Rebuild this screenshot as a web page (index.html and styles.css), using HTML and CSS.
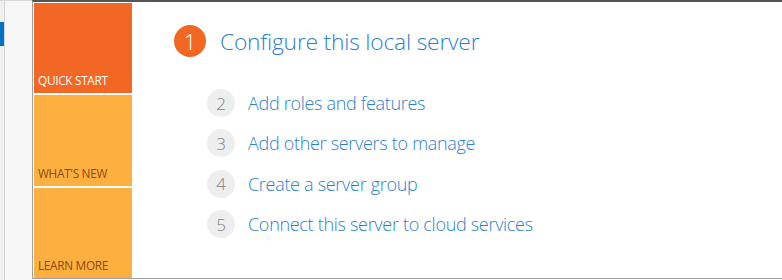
FILE: index.html
```html
<!DOCTYPE html>
<html lang="en">
<head>
    <meta charset="UTF-8">
    <title>Welcome to Server Manager</title>
    <link rel="stylesheet" href="styles.css">
</head>
<body>
    <div class="page">
        <div class="rail">
            <div class="rail-edge"><span class="rail-marker"></span></div>
        </div>

        <div class="pane">
            <div class="tiles">
                <div class="tile tile-start">QUICK START</div>
                <div class="tile tile-light">WHAT'S NEW</div>
                <div class="tile tile-light">LEARN MORE</div>
            </div>

            <div class="steps">
                <div class="step step-main">
                    <span class="num num-main">1</span>
                    <span class="step-text">Configure this local server</span>
                </div>

                <ol class="step-list">
                    <li class="step"><span class="num">2</span><span class="step-text">Add roles and features</span></li>
                    <li class="step"><span class="num">3</span><span class="step-text">Add other servers to manage</span></li>
                    <li class="step"><span class="num">4</span><span class="step-text">Create a server group</span></li>
                    <li class="step"><span class="num">5</span><span class="step-text">Connect this server to cloud services</span></li>
                </ol>
            </div>
        </div>
    </div>
</body>
</html>
```

FILE: styles.css
```css
body {
    margin: 0;
    background-color: #ffffff;
    font-family: "Open Sans", "Noto Sans", sans-serif;
}

.page {
    display: flex;
    height: 280px;
}

/* left navigation strip */
.rail {
    width: 32px;
    display: flex;
    background-color: #f7f7f7;
    border-top: 1px solid #d8d8d8;
}

.rail-edge {
    width: 4px;
    background-color: #f0f0f0;
    border-right: 1px solid #d4d4d4;
}

.rail-marker {
    display: block;
    width: 4px;
    height: 24px;
    margin-top: 21px;
    background-color: #0072c6;
}

.pane {
    flex: 1;
    display: flex;
    height: 275px;
    padding: 1px 0 0 1px;
    border-top: 2px solid #555555;
    border-left: 1px solid #a0a0a0;
    border-bottom: 1px solid #a0a0a0;
}

.tiles {
    width: 98px;
    display: flex;
    flex-direction: column;
    gap: 2px;
}

.tile {
    flex: 1;
    display: flex;
    align-items: flex-end;
    padding: 0 0 5px 4px;
    font-size: 11.8px;
    letter-spacing: -0.3px;
}

.tile-start {
    background-color: #f26724;
    color: #ffffff;
}

.tile-light {
    background-color: #fdb040;
    color: #8b4a10;
}

.steps {
    padding: 22px 0 0 42px;
}

.step {
    display: flex;
    align-items: center;
}

.step-main .step-text {
    margin-left: 14px;
    font-size: 22.8px;
    font-weight: 300;
    color: #2a7fcf;
    letter-spacing: -0.2px;
}

.num {
    width: 28px;
    height: 28px;
    border-radius: 50%;
    background-color: #eeeeee;
    color: #808080;
    display: flex;
    align-items: center;
    justify-content: center;
    font-size: 17px;
    font-weight: 300;
}

.num-main {
    width: 32px;
    height: 32px;
    background-color: #f26724;
    color: #ffffff;
    font-size: 22px;
}

.step-list {
    list-style: none;
    margin: 32px 0 0 33px;
    padding: 0;
    display: flex;
    flex-direction: column;
    gap: 12.4px;
}

.step-list .step-text {
    margin-left: 13px;
    font-size: 18px;
    font-weight: 300;
    color: #2a7fcf;
    letter-spacing: -0.3px;
}
```
